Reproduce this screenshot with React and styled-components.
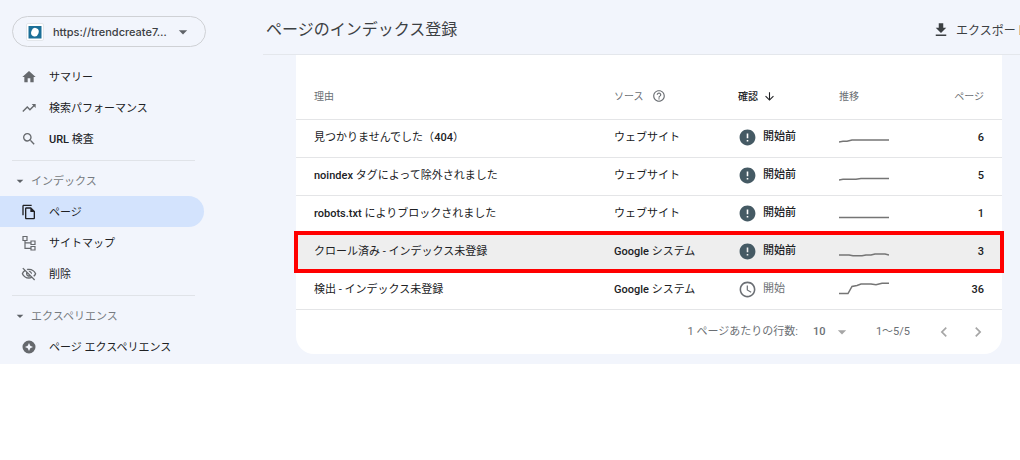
import React from "react";
import styled, { createGlobalStyle } from "styled-components";
import {
  MdHome,
  MdTrendingUp,
  MdSearch,
  MdOutlineFileCopy,
  MdOutlineVisibilityOff,
  MdArrowDropDown,
  MdFileDownload,
  MdHelpOutline,
  MdArrowDownward,
  MdError,
  MdSchedule,
  MdChevronLeft,
  MdChevronRight,
} from "react-icons/md";

const SitemapIcon = () => (
  <svg width="16" height="16" viewBox="0 0 16 16" fill="none" stroke="currentColor" strokeWidth="1.2">
    <path d="M2 1.500h4v4h-4zM10 6h4v3.500h-4zM10 11.500h4v3.500h-4zM4 5.500v7.800h6M4 7.800h6" />
  </svg>
);

const ExperienceIcon = () => (
  <svg width="16" height="16" viewBox="0 0 16 16">
    <path
      fill="currentColor"
      fillRule="evenodd"
      d="M8 1.500a6.500 6.500 0 1 0 0 13a6.500 6.500 0 0 0 0-13zM8 4l1.300 2.700L12 8L9.300 9.300L8 12L6.700 9.300L4 8l2.700-1.300z"
    />
  </svg>
);

const FaviconIcon = () => (
  <svg width="18" height="18" viewBox="0 0 18 18">
    <rect x=".5" y=".5" width="17" height="17" rx="1.500" fill="#fff" stroke="#e3e6ea" />
    <rect x="2.500" y="3" width="13" height="12.500" fill="#1b6f98" />
    <ellipse cx="9" cy="9.200" rx="3.700" ry="4.300" fill="#fff" transform="rotate(20 9 9)" />
  </svg>
);

const rows = [
  {
    reason: "見つかりませんでした（404）",
    source: "ウェブサイト",
    trend: "0,13 4,12.200 8,12.200 13,11 50,11",
    pages: 6,
  },
  {
    reason: "noindex タグによって除外されました",
    source: "ウェブサイト",
    trend: "0,13 4,12.200 17,12.200 22,11.500 50,11.500",
    pages: 5,
  },
  {
    reason: "robots.txt によりブロックされました",
    source: "ウェブサイト",
    trend: "0,12.500 50,12.500",
    pages: 1,
  },
  {
    reason: "クロール済み - インデックス未登録",
    source: "Google システム",
    trend: "0,12 10,12 14,12.800 23,12.800 27,12 32,12 36,11 46,11 50,12",
    pages: 3,
    marked: true,
  },
  {
    reason: "検出 - インデックス未登録",
    source: "Google システム",
    trend: "0,12.500 9,12.500 13,5.500 18,4.500 22,3 32,3 37,3.800 43,2.300 50,2.300",
    pages: 36,
    started: true,
  },
];

// Latin words and digits are set in medium, Japanese in regular
const Label = ({ children }) => (
  <LabelText>
    {String(children)
      .split(/([A-Za-z0-9.]+)/)
      .map((part, i) => (i % 2 ? <Latin key={i}>{part}</Latin> : part))}
  </LabelText>
);

const App = () => {
  return (
    <>
      <GlobalStyle />
      <Page>
        <Sidebar>
          <PropertyButton type="button">
            <FaviconIcon />
            <PropertyName>https://trendcreate7…</PropertyName>
            <MdArrowDropDown size={20} />
          </PropertyButton>
          <nav>
            <NavItem href="#summary">
              <MdHome size={16} />
              <Label>サマリー</Label>
            </NavItem>
            <NavItem href="#performance">
              <MdTrendingUp size={16} />
              <Label>検索パフォーマンス</Label>
            </NavItem>
            <NavItem href="#inspect">
              <MdSearch size={16} />
              <Label>URL 検査</Label>
            </NavItem>
            <Divider />
            <NavHeading type="button">
              <MdArrowDropDown size={16} />
              <Label>インデックス</Label>
            </NavHeading>
            <NavItem href="#pages" $active>
              <MdOutlineFileCopy size={16} />
              <Label>ページ</Label>
            </NavItem>
            <NavItem href="#sitemaps">
              <SitemapIcon />
              <Label>サイトマップ</Label>
            </NavItem>
            <NavItem href="#removals">
              <MdOutlineVisibilityOff size={16} />
              <Label>削除</Label>
            </NavItem>
            <Divider />
            <NavHeading type="button">
              <MdArrowDropDown size={16} />
              <Label>エクスペリエンス</Label>
            </NavHeading>
            <NavItem href="#experience">
              <ExperienceIcon />
              <Label>ページ エクスペリエンス</Label>
            </NavItem>
          </nav>
        </Sidebar>

        <Main>
          <Header>
            <Title>ページのインデックス登録</Title>
            <ExportButton type="button">
              <MdFileDownload size={18} />
              <Label>エクスポート</Label>
            </ExportButton>
          </Header>
          <Card>
            <Table>
              <thead>
                <tr>
                  <HeadCell>理由</HeadCell>
                  <HeadCell $width="124px">
                    <HelpHeading>
                      ソース
                      <MdHelpOutline size={14} />
                    </HelpHeading>
                  </HeadCell>
                  <HeadCell $width="101px" $sorted>
                    <SortHeading>
                      確認
                      <MdArrowDownward size={13} />
                    </SortHeading>
                  </HeadCell>
                  <HeadCell $width="83px">推移</HeadCell>
                  <HeadCell $width="80px" $right>
                    ページ
                  </HeadCell>
                </tr>
              </thead>
              <tbody>
                {rows.map((row) => (
                  <Row key={row.reason} $marked={row.marked}>
                    <Cell>
                      <Label>{row.reason}</Label>
                    </Cell>
                    <Cell>
                      <Label>{row.source}</Label>
                    </Cell>
                    <Cell>
                      <Status $muted={row.started}>
                        {row.started ? <MdSchedule size={19} /> : <MdError size={19} />}
                        {row.started ? "開始" : "開始前"}
                      </Status>
                    </Cell>
                    <Cell>
                      <Sparkline width="50" height="16" viewBox="0 0 50 16">
                        <polyline points={row.trend} />
                      </Sparkline>
                    </Cell>
                    <Cell $right>
                      <Label>{row.pages}</Label>
                    </Cell>
                  </Row>
                ))}
              </tbody>
            </Table>
            <Pagination>
              <label htmlFor="rows">1 ページあたりの行数:</label>
              <SelectWrap>
                <RowsSelect id="rows" defaultValue="10">
                  <option>10</option>
                  <option>25</option>
                </RowsSelect>
                <MdArrowDropDown size={20} />
              </SelectWrap>
              <Range>1～5/5</Range>
              <PageButton type="button" aria-label="前へ">
                <MdChevronLeft size={20} />
              </PageButton>
              <PageButton type="button" aria-label="次へ">
                <MdChevronRight size={20} />
              </PageButton>
            </Pagination>
          </Card>
        </Main>
      </Page>
    </>
  );
};

const GlobalStyle = createGlobalStyle`
  * {
    box-sizing: border-box;
  }
  body {
    margin: 0;
    background: #fff;
    color: #202124;
    font-family: Roboto, "Noto Sans CJK JP", sans-serif;
    font-size: 11px;
    line-height: 16px;
  }
  button, select {
    font: inherit;
    color: inherit;
    border: none;
    background: none;
    padding: 0;
    cursor: pointer;
  }
  svg {
    flex-shrink: 0;
  }
`;

const LabelText = styled.span`
  display: inline-block;
  padding-top: 2px;
`;

const Latin = styled.span`
  font-weight: 500;
`;

const Page = styled.div`
  display: flex;
  background: #f2f5fc;
  overflow: hidden;
`;

const Sidebar = styled.aside`
  flex: 0 0 263px;
  padding: 16px 0 2px;
`;

const PropertyButton = styled.button`
  display: flex;
  align-items: center;
  width: 194px;
  height: 31px;
  margin: 0 0 14px 12px;
  padding: 0 12px 0 13px;
  border: 1px solid #cfd1d5;
  border-radius: 16px;
  color: #5f6368;
`;

const PropertyName = styled.span`
  flex: 1;
  margin-left: 9px;
  text-align: left;
  white-space: nowrap;
  font-family: Inter, sans-serif;
  font-weight: 500;
  color: #3c4043;
`;

const NavItem = styled.a`
  display: flex;
  align-items: center;
  gap: 12px;
  width: 204px;
  height: 31px;
  padding-left: 21px;
  border-radius: 0 16px 16px 0;
  background: ${(props) => (props.$active ? "#d3e3fd" : "transparent")};
  color: #202124;
  text-decoration: none;

  svg {
    color: ${(props) => (props.$active ? "#202124" : "#66696d")};
  }
`;

const NavHeading = styled.button`
  display: flex;
  align-items: center;
  gap: 3px;
  height: 30px;
  padding-left: 12px;
  color: #777b80;

  svg {
    color: #5f6368;
  }
`;

const Divider = styled.hr`
  width: 183px;
  margin: 6px 0 5px 12px;
  border: none;
  border-top: 1px solid #e0e3e8;
`;

const Main = styled.main`
  flex: 1;
  min-width: 0;
`;

const Header = styled.header`
  display: flex;
  align-items: center;
  justify-content: space-between;
  height: 55px;
  padding: 6px 0 0 3px;
  border-bottom: 1px solid #e4e7ec;
`;

const Title = styled.h1`
  margin: 0;
  font-size: 16px;
  line-height: 24px;
  font-weight: 400;
  color: #3c4043;
`;

const ExportButton = styled.button`
  display: flex;
  flex: 0 0 88px;
  align-items: center;
  gap: 6px;
  min-width: 0;
  font-size: 12px;
  color: #3c4043;
  white-space: nowrap;
`;

const Card = styled.section`
  margin: 0 18px 10px 33px;
  background: #fff;
  border-radius: 0 0 18px 18px;
`;

const Table = styled.table`
  width: 100%;
  table-layout: fixed;
  border-collapse: collapse;
`;

const HeadCell = styled.th`
  width: ${(props) => props.$width || "auto"};
  height: 64px;
  padding: 20px 0 0;
  border-bottom: 1px solid #e4e5e7;
  text-align: ${(props) => (props.$right ? "right" : "left")};
  font-size: 10px;
  font-weight: ${(props) => (props.$sorted ? 500 : 400)};
  color: ${(props) => (props.$sorted ? "#202124" : "#6b6f74")};

  &:first-child {
    padding-left: 18px;
  }
  &:last-child {
    padding-right: 18px;
  }
`;

const HelpHeading = styled.div`
  display: flex;
  align-items: flex-start;
  gap: 8px;
`;

const SortHeading = styled.div`
  display: flex;
  align-items: center;
  gap: 5px;
`;

const Row = styled.tr`
  background: ${(props) => (props.$marked ? "#eee" : "transparent")};
  outline: ${(props) => (props.$marked ? "4px solid #f00" : "none")};
  outline-offset: -2px;
`;

const Cell = styled.td`
  height: 38px;
  padding: 0 0 2px;
  border-bottom: 1px solid #e4e5e7;
  text-align: ${(props) => (props.$right ? "right" : "left")};

  &:first-child {
    padding-left: 18px;
  }
  &:last-child {
    padding-right: 18px;
  }
`;

const Status = styled.div`
  display: flex;
  align-items: center;
  gap: 6px;
  font-weight: ${(props) => (props.$muted ? 400 : 500)};
  color: ${(props) => (props.$muted ? "#6b6f74" : "#202124")};

  svg {
    color: ${(props) => (props.$muted ? "#6b6f74" : "#455a64")};
  }
`;

const Sparkline = styled.svg`
  display: block;
  fill: none;
  stroke: #757575;
  stroke-width: 1.5;
`;

const Pagination = styled.div`
  display: flex;
  align-items: center;
  justify-content: flex-end;
  height: 44px;
  padding-right: 14px;
  color: #6b6f74;
`;

const SelectWrap = styled.div`
  display: flex;
  align-items: center;
  margin: 0 24px 0 15px;

  svg {
    margin-left: 6px;
    color: #a6a6a6;
  }
`;

const RowsSelect = styled.select`
  appearance: none;
  font-weight: 500;
`;

const Range = styled.span`
  margin-right: 10px;
`;

const PageButton = styled.button`
  display: flex;
  margin-left: 14px;
  color: #a6a6a6;
`;

export default App;
